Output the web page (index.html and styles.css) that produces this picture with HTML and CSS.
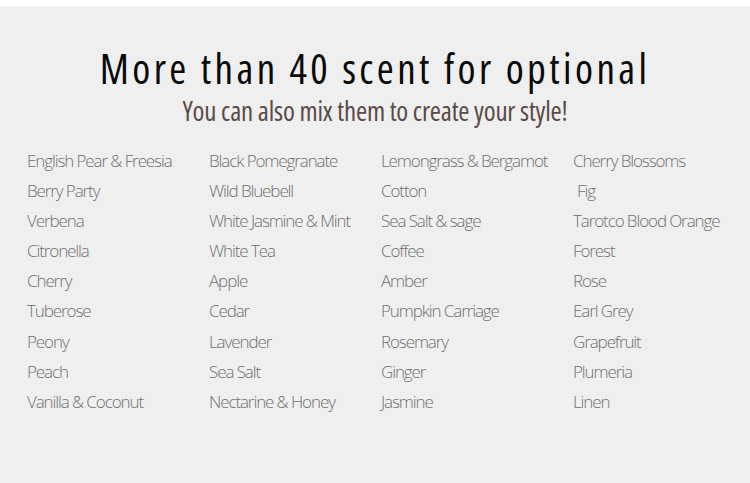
FILE: index.html
```html
<!DOCTYPE html>
<html>
<head>
<meta charset="utf-8">
<link rel="stylesheet" href="styles.css">
</head>
<body>
<div class="page">
  <h1 class="title">More than 40 scent for optional</h1>
  <p class="subtitle">You can also mix them to create your style!</p>
  <ul class="scents">
    <li>English Pear &amp; Freesia</li>
    <li>Berry Party</li>
    <li>Verbena</li>
    <li>Citronella</li>
    <li>Cherry</li>
    <li>Tuberose</li>
    <li>Peony</li>
    <li>Peach</li>
    <li>Vanilla &amp; Coconut</li>
    <li>Black Pomegranate</li>
    <li>Wild Bluebell</li>
    <li>White Jasmine &amp; Mint</li>
    <li>White Tea</li>
    <li>Apple</li>
    <li>Cedar</li>
    <li>Lavender</li>
    <li>Sea Salt</li>
    <li>Nectarine &amp; Honey</li>
    <li>Lemongrass &amp; Bergamot</li>
    <li>Cotton</li>
    <li>Sea Salt &amp; sage</li>
    <li>Coffee</li>
    <li>Amber</li>
    <li>Pumpkin Carriage</li>
    <li>Rosemary</li>
    <li>Ginger</li>
    <li>Jasmine</li>
    <li>Cherry Blossoms</li>
    <li class="indent">Fig</li>
    <li>Tarotco Blood Orange</li>
    <li>Forest</li>
    <li>Rose</li>
    <li>Earl Grey</li>
    <li>Grapefruit</li>
    <li>Plumeria</li>
    <li>Linen</li>
  </ul>
</div>
</body>
</html>
```
FILE: styles.css
```css
html, body {
  margin: 0;
  padding: 0;
  background: #ffffff;
}
.page {
  margin-top: 6px;
  height: 477px;
  background: #efefef;
  font-family: "Open Sans", sans-serif;
  overflow: hidden;
}
.title {
  margin: 0;
  padding-top: 38px;
  text-align: center;
  font-weight: 500;
  font-size: 41px;
  font-stretch: 75%;
  line-height: 48px;
  letter-spacing: 3.4px;
  color: #0a0a0a;
}
.subtitle {
  margin: 0;
  padding-top: 3px;
  text-align: center;
  font-size: 27px;
  font-stretch: 75%;
  line-height: 32px;
  letter-spacing: -0.2px;
  color: #5b4b47;
}
.scents {
  list-style: none;
  margin: 0;
  padding: 19px 0 0 27px;
  display: grid;
  grid-template-columns: 182px 172px 192px auto;
  grid-template-rows: repeat(9, 30.1px);
  grid-auto-flow: column;
  font-size: 17px;
  font-weight: 300;
  letter-spacing: -1.1px;
  color: #707070;
}
.scents li {
  line-height: 30px;
  white-space: nowrap;
}
.scents .indent {
  padding-left: 4px;
}
```
